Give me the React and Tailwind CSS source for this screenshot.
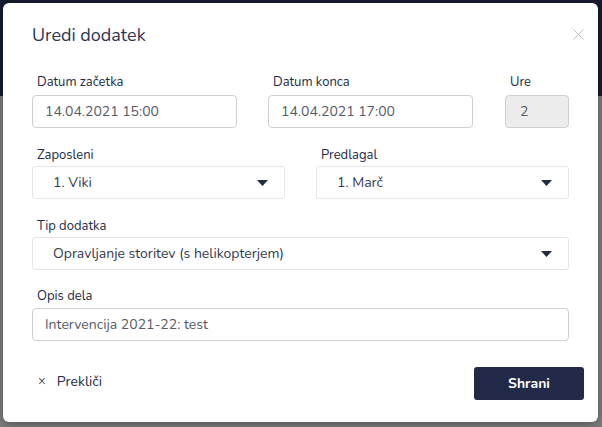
import { X } from "lucide-react";

function Caret() {
  return (
    <svg width="11" height="6" viewBox="0 0 11 6" className="shrink-0">
      <path d="M0 0 L11 0 L5.5 6 Z" fill="#222a44" />
    </svg>
  );
}

function Field({ label, children, className = "", gap = "mb-[2px]" }) {
  return (
    <div className={"flex flex-col " + className}>
      <label className={"text-[13px] leading-[18px] text-[#222a44] pl-[5px] " + gap}>{label}</label>
      {children}
    </div>
  );
}

function TextInput({ value, disabled }) {
  return (
    <div
      className={
        "h-[33px] flex items-center rounded-[4px] border border-[#cfcfcf] text-[14px] text-[#555a66] " +
        (disabled ? "bg-[#ececec] pl-[14px]" : "bg-white pl-[12px]")
      }
    >
      {value}
    </div>
  );
}

function Select({ value }) {
  return (
    <div className="h-[33px] flex items-center justify-between rounded-[3px] border border-[#e6e6e6] bg-white text-[14px] text-[#333a4d] pl-[20px] pr-[16px]">
      <span>{value}</span>
      <Caret />
    </div>
  );
}

export default function App() {
  return (
    <div
      className="relative w-[602px] h-[427px] overflow-hidden bg-[#7b7b7b]"
      style={{ fontFamily: "Nunito, Lato, 'Noto Sans', sans-serif" }}
    >
      <div className="h-[96px] bg-[#161c2e]" />
      <div className="absolute left-[3px] top-[3px] w-[595px] h-[419px] bg-white rounded-[6px] shadow-[0_2px_8px_rgba(0,0,0,0.3)] px-[29px] flex flex-col">
        <div className="flex items-center justify-between h-[62px] pt-[2px]">
          <h2 className="text-[18px] text-[#2d3452]">Uredi dodatek</h2>
          <X size={19} strokeWidth={1.2} className="text-[#b8b8b8] -mr-[19px] -mt-[2px]" />
        </div>

        <div className="flex gap-[31px] mt-[8px]">
          <Field label="Datum začetka" className="w-[205px]" gap="mb-[4px]">
            <TextInput value="14.04.2021 15:00" />
          </Field>
          <Field label="Datum konca" className="w-[205px]" gap="mb-[4px]">
            <TextInput value="14.04.2021 17:00" />
          </Field>
          <Field label="Ure" className="w-[64px] ml-[1px]" gap="mb-[4px]">
            <TextInput value="2" disabled />
          </Field>
        </div>

        <div className="flex gap-[31px] mt-[18px]">
          <Field label="Zaposleni" className="w-[253px]">
            <Select value="1. Viki" />
          </Field>
          <Field label="Predlagal" className="w-[253px]">
            <Select value="1. Marč" />
          </Field>
        </div>

        <Field label="Tip dodatka" className="mt-[18px] w-[537px]">
          <Select value="Opravljanje storitev (s helikopterjem)" />
        </Field>

        <Field label="Opis dela" className="mt-[17px] w-[537px]" gap="mb-[3px]">
          <TextInput value="Intervencija 2021-22: test" />
        </Field>

        <div className="flex items-center justify-between mt-[26px] -mr-[15px]">
          <button className="flex items-center gap-[11px] pl-[6px] mb-[4px] text-[14px] text-[#222a44]">
            <span className="text-[13px] text-[#444]">×</span>
            <span>Prekliči</span>
          </button>
          <button className="w-[110px] h-[33px] rounded-[3px] bg-[#222a47] text-white text-[14px] font-bold">
            Shrani
          </button>
        </div>
      </div>
    </div>
  );
}
